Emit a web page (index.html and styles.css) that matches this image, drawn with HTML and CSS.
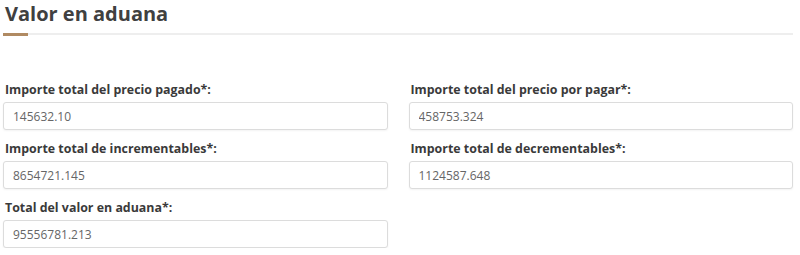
FILE: index.html
```html
<!DOCTYPE html>
<html lang="es">
<head>
    <meta charset="UTF-8">
    <meta name="viewport" content="width=device-width, initial-scale=1.0">
    <title>Valor en aduana</title>
    <link rel="stylesheet" href="styles.css">
</head>
<body>
    <div class="section">
        <div class="section-header">
            <h2>Valor en aduana</h2>
            <div class="section-rule"><span class="section-accent"></span></div>
        </div>
        <div class="form-grid">
            <div class="field">
                <label for="pagado">Importe total del precio pagado*:</label>
                <input type="text" id="pagado" value="145632.10">
            </div>
            <div class="field">
                <label for="por-pagar">Importe total del precio por pagar*:</label>
                <input type="text" id="por-pagar" value="458753.324">
            </div>
            <div class="field">
                <label for="incrementables">Importe total de incrementables*:</label>
                <input type="text" id="incrementables" value="8654721.145">
            </div>
            <div class="field">
                <label for="decrementables">Importe total de decrementables*:</label>
                <input type="text" id="decrementables" value="1124587.648">
            </div>
            <div class="field">
                <label for="valor-aduana">Total del valor en aduana*:</label>
                <input type="text" id="valor-aduana" value="95556781.213">
            </div>
        </div>
    </div>
</body>
</html>
```

FILE: styles.css
```css
body {
    margin: 0;
    padding: 0;
    background-color: #ffffff;
    font-family: "Open Sans", Arial, sans-serif;
    color: #333333;
}
.section {
    padding: 0 7px 0 3px;
}
.section-header {
    padding-top: 1px;
}
.section-header h2 {
    margin: 0 0 0 2px;
    font-size: 20px;
    line-height: 26px;
    font-weight: 700;
    color: #404040;
}
.section-rule {
    margin-top: 6px;
    height: 2px;
    background-color: #eeeeee;
}
.section-accent {
    display: block;
    width: 25px;
    height: 3px;
    background-color: #b08a62;
}
.form-grid {
    display: grid;
    grid-template-columns: 1fr 1fr;
    column-gap: 21px;
    row-gap: 10px;
    margin-top: 46px;
}
.field {
    display: flex;
    flex-direction: column;
}
.field label {
    font-size: 12.4px;
    font-weight: 700;
    line-height: 17px;
    margin: 0 0 4px 2px;
    color: #3a3a3a;
}
.field input {
    height: 28px;
    box-sizing: border-box;
    padding: 0 9px;
    border: 1px solid #dcdcdc;
    border-radius: 3px;
    box-shadow: 0 1px 2px rgba(0, 0, 0, 0.05);
    font-family: "Open Sans", Arial, sans-serif;
    font-size: 12px;
    color: #666666;
    background-color: #ffffff;
}
```
